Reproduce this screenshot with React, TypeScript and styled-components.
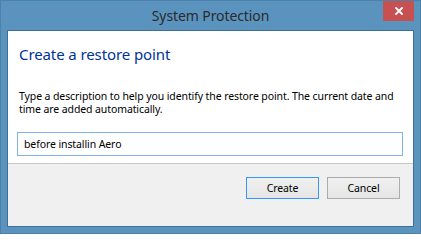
import styled, { createGlobalStyle } from "styled-components";

const GlobalStyle = createGlobalStyle`
  html, body {
    margin: 0;
    padding: 0;
    background: #ffffff;
  }
  body {
    font-family: "Noto Sans", "Open Sans", sans-serif;
  }
`;

/**     STYLED      **/
const Window = styled.div`
    box-sizing: border-box;
    width: 421px;
    height: 234px;
    background: #5b93bf;
    border: 1px solid #4b81ab;
    display: flex;
    flex-direction: column;
`;

const TitleBar = styled.div`
    height: 29px;
    display: grid;
    grid-template-columns: 1fr auto 1fr;
    align-items: start;
`;

const Title = styled.div`
    grid-column: 2;
    font-size: 14px;
    letter-spacing: -0.1px;
    line-height: 29px;
    color: #2b2b2b;
    white-space: nowrap;
`;

const CloseButton = styled.div`
    grid-column: 3;
    justify-self: end;
    margin-right: 6px;
    width: 31px;
    height: 20px;
    background: #c75050;
    display: flex;
    align-items: center;
    justify-content: center;
`;

const Client = styled.div`
    flex: 1;
    margin: 0 6px 6px;
    border: 1px solid #3f6f98;
    background: #ffffff;
    display: flex;
    flex-direction: column;
`;

const Content = styled.div`
    flex: 1;
    padding: 12px 10px 0 9px;
    display: flex;
    flex-direction: column;
`;

const Heading = styled.h1`
    margin: 0 0 0 2px;
    font-size: 15px;
    letter-spacing: -0.1px;
    font-weight: normal;
    line-height: 22px;
    color: #003399;
`;

const Description = styled.p`
    margin: 25px 0 0 2px;
    font-size: 10.5px;
    letter-spacing: -0.1px;
    line-height: 13px;
    color: #000000;
`;

const TextBox = styled.input`
    box-sizing: border-box;
    margin-top: 16px;
    width: 386px;
    height: 24px;
    border: 1px solid #7eb4ea;
    padding: 0 6px;
    font-family: inherit;
    font-size: 10.5px;
    letter-spacing: -0.1px;
    color: #000000;
    outline: none;
    background: #ffffff;
`;

const Footer = styled.div`
    height: 49px;
    border-top: 1px solid #c9c9c9;
    background: #f0f0f0;
    display: flex;
    justify-content: flex-end;
    align-items: flex-start;
    gap: 8px;
    padding: 13px 13px 0 0;
    box-sizing: content-box;
`;

const Button = styled.button<{ $default?: boolean }>`
    box-sizing: border-box;
    width: 73px;
    height: 22px;
    padding: 0;
    border: 1px solid ${p => (p.$default ? "#3399ff" : "#acacac")};
    background: linear-gradient(#f0f0f0, #e5e5e5);
    font-family: inherit;
    font-size: 10.5px;
    letter-spacing: -0.1px;
    color: #000000;
`;
/**     STYLED      **/

export default function App() {
    return (
        <>
            <GlobalStyle/>
            <Window>
                <TitleBar>
                    <Title>System Protection</Title>
                    <CloseButton>
                        <svg width="8" height="8" viewBox="0 0 8 8">
                            <path d="M1 1 L7 7 M7 1 L1 7" stroke="#ffffff" strokeWidth="1.9" strokeLinecap="square"/>
                        </svg>
                    </CloseButton>
                </TitleBar>
                <Client>
                    <Content>
                        <Heading>Create a restore point</Heading>
                        <Description>
                            Type a description to help you identify the restore point. The current date and
                            time are added automatically.
                        </Description>
                        <TextBox defaultValue="before installin Aero"/>
                    </Content>
                    <Footer>
                        <Button $default>Create</Button>
                        <Button>Cancel</Button>
                    </Footer>
                </Client>
            </Window>
        </>
    );
}
